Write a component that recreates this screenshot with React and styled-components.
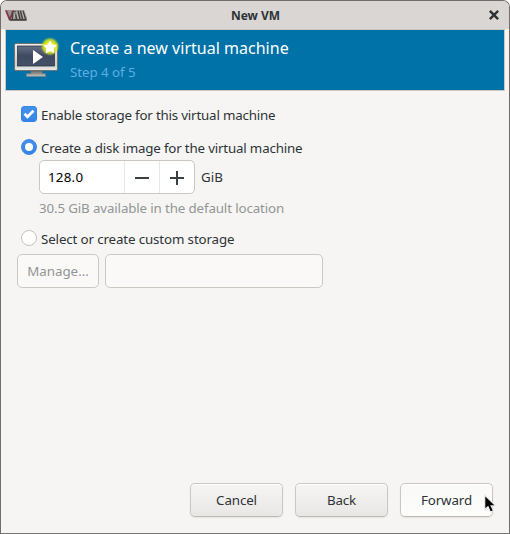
import React from "react";
import styled, { createGlobalStyle, css } from "styled-components";

const GlobalStyle = createGlobalStyle`
  * { box-sizing: border-box; }
  html, body { margin: 0; padding: 0; background: #fff; overflow: hidden; }
  body { font: 13.33px/18px "Noto Sans", sans-serif; color: #2e3436; }
`;

const Window = styled.main`
  position: relative;
  display: flex;
  flex-direction: column;
  width: 510px;
  height: 534px;
  border: 1px solid #716d6a;
  border-bottom-color: #777;
  border-radius: 7px 7px 0 0;
  background: #f6f5f4;
  overflow: hidden;
`;

const TitleBar = styled.header`
  display: grid;
  grid-template-columns: 24px 1fr 24px;
  align-items: center;
  flex: none;
  height: 28px;
  padding: 0 3px 0 4px;
  background: #dad6d3;
`;

const WindowTitle = styled.h1`
  margin: 0;
  padding-top: 1px;
  font-size: 12px;
  line-height: 18px;
  font-weight: 700;
  text-align: center;
`;

const CloseButton = styled.button`
  display: flex;
  justify-content: center;
  padding: 0;
  border: 0;
  background: none;
`;

const Banner = styled.section`
  display: flex;
  flex: none;
  height: 62px;
  margin: 0 4px;
  padding: 5px 8px;
  gap: 8px;
  border: 1px solid #cdc7c2;
  background: #0072a8;
`;

const BannerText = styled.div`
  padding-top: 2px;
`;

const BannerTitle = styled.h2`
  margin: 0;
  font-size: 16px;
  line-height: 22px;
  font-weight: 400;
  letter-spacing: 0.02px;
  color: #fff;
`;

const Step = styled.p`
  margin: 4px 0 0;
  line-height: 18px;
  letter-spacing: -0.06px;
  color: #5caee0;
`;

const Content = styled.section`
  display: flex;
  flex-direction: column;
  flex: 1;
  padding: 14px 16px 0;
`;

const Choice = styled.label`
  display: flex;
  align-items: center;
  gap: 4px;
  height: 18px;
  margin: 0 0 ${(p) => p.$after}px 4px;
`;

const ChoiceText = styled.span`
  padding-top: 2px;
  letter-spacing: ${(p) => p.$tracking}px;
`;

const Mark = styled.span`
  display: flex;
  flex: none;
  align-items: center;
  justify-content: center;
  width: 16px;
  height: 16px;
  border-radius: ${(p) => (p.$round ? "50%" : "3px")};
  border: 1px solid #c8c1bb;
  background: #fff;
  ${(p) =>
    p.$checked &&
    css`
      border-color: #3683e5;
      background: linear-gradient(#4590ec, #3584e4);
    `}
`;

const RadioDot = styled.span`
  width: 8px;
  height: 8px;
  border-radius: 50%;
  background: #fff;
`;

const SizeRow = styled.div`
  display: flex;
  align-items: center;
  gap: 6px;
  margin-left: 22px;
`;

const SpinBox = styled.div`
  display: grid;
  grid-template-columns: 84px 35px 35px;
  width: 156px;
  height: 34px;
  border: 1px solid #cdc7c2;
  border-radius: 5px;
  background: #fff;
  overflow: hidden;
`;

const SpinValue = styled.span`
  padding-left: 8px;
  line-height: 33px;
  letter-spacing: 0.25px;
  color: #000;
`;

const SpinButton = styled.button`
  display: flex;
  align-items: center;
  justify-content: center;
  padding: 0;
  border: 0;
  border-left: 1px solid #eae8e6;
  background: none;
`;

const Hint = styled.p`
  margin: 5px 0 12px 22px;
  letter-spacing: -0.135px;
  color: #929595;
`;

const StorageRow = styled.div`
  display: flex;
  gap: 6px;
`;

const Button = styled.button`
  width: 93px;
  height: 34px;
  padding: 0;
  border: 1px solid #cdc7c2;
  border-bottom-color: #bfb8b1;
  border-radius: 5px;
  background: ${(p) => (p.$hover ? "linear-gradient(#f9f9f8, #fdfdfc)" : "linear-gradient(#f6f5f4, #e9e7e5)")};
  box-shadow: inset 0 1px #fff, 0 1px 2px rgba(0, 0, 0, 0.07);
  font: inherit;
  letter-spacing: -0.12px;
  color: #2e3436;
`;

const DisabledButton = styled(Button)`
  width: 82px;
  border-color: #cdc7c2;
  background: #faf9f8;
  box-shadow: none;
  letter-spacing: 0;
  color: #929595;
`;

const DisabledInput = styled.input`
  width: 218px;
  height: 34px;
  border: 1px solid #cdc7c2;
  border-radius: 5px;
  background: #faf9f8;
`;

const Footer = styled.footer`
  display: flex;
  justify-content: flex-end;
  gap: 12px;
  padding: 0 16px 16px;
`;

const Cursor = styled.svg`
  position: absolute;
  left: 483px;
  top: 493px;
`;

function AppIcon() {
  return (
    <svg width="24" height="14" viewBox="0 0 24 14">
      <path d="M0 2h19l3 8v2.500H4z" fill="#969391" />
      <path d="M1 2.500l3.500 8.500M8.500 2.500L5 11" fill="none" stroke="#8a3346" strokeWidth="1.800" />
      <path d="M7.500 11V3.500M10 3l1.500 8M13 3l2 8M15.500 3l2 8M18 3l2.500 8" fill="none" stroke="#414141" strokeWidth="1.300" />
      <path d="M8.500 11l2-7M11.500 3.500l1.800 7M17 3.500l2 7" fill="none" stroke="#c0bdbb" strokeWidth=".8" />
      <path d="M3.500 11H21.500v1.800H5z" fill="#444" />
    </svg>
  );
}

function CloseIcon() {
  return (
    <svg width="10" height="10" viewBox="0 0 10 10">
      <path d="M1.700 1.700l6.600 6.600M8.300 1.700L1.700 8.300" stroke="#2e3436" strokeWidth="2.400" strokeLinecap="square" />
    </svg>
  );
}

function MachineIcon() {
  return (
    <svg width="48" height="48" viewBox="0 0 48 48">
      <defs>
        <linearGradient id="screen" x2="0" y2="1">
          <stop stopColor="#657087" />
          <stop offset=".5" stopColor="#3f4a5f" />
          <stop offset="1" stopColor="#445168" />
        </linearGradient>
        <linearGradient id="frame" x2="0" y2="1">
          <stop stopColor="#eeeeec" />
          <stop offset=".8" stopColor="#cfcfcb" />
          <stop offset="1" stopColor="#eeeeec" />
        </linearGradient>
        <linearGradient id="stand" x2="0" y2="1">
          <stop stopColor="#555" />
          <stop offset="1" stopColor="#c5c5c1" />
        </linearGradient>
        <radialGradient id="glow">
          <stop offset=".35" stopColor="#f2f51a" />
          <stop offset=".7" stopColor="#d9e51c" stopOpacity=".85" />
          <stop offset="1" stopColor="#c2df26" stopOpacity="0" />
        </radialGradient>
      </defs>
      <path d="M17 35h11v3.500h3.500v3H12.500v-3H17z" fill="url(#stand)" stroke="#777" strokeWidth=".5" />
      <rect x=".5" y="8.500" width="43" height="27" rx="1.500" fill="url(#frame)" stroke="#70736f" />
      <rect x="3.500" y="11" width="37" height="20" fill="url(#screen)" stroke="#222b3b" strokeWidth=".7" />
      <path d="M19 15l10 7-10 7z" fill="#fff" />
      <circle cx="36" cy="11.500" r="9.500" fill="url(#glow)" />
      <path d="M36 6l1.900 4 4.200.5-3 2.900.7 4.300-3.800-2.100-3.800 2.100.7-4.300-3-2.900 4.200-.5z" fill="#fff" stroke="#fff" strokeLinejoin="round" />
    </svg>
  );
}

export default function App() {
  return (
    <>
      <GlobalStyle />
      <Window>
        <TitleBar>
          <AppIcon />
          <WindowTitle>New VM</WindowTitle>
          <CloseButton aria-label="Close"><CloseIcon /></CloseButton>
        </TitleBar>
        <Banner>
          <MachineIcon />
          <BannerText>
            <BannerTitle>Create a new virtual machine</BannerTitle>
            <Step>Step 4 of 5</Step>
          </BannerText>
        </Banner>
        <Content>
          <Choice $after={15}>
            <Mark $checked>
              <svg width="14" height="14" viewBox="0 0 14 14">
                <path d="M2.500 6.700l3 3 6-6" fill="none" stroke="#fff" strokeWidth="2.800" />
              </svg>
            </Mark>
            <ChoiceText $tracking={-0.19}>Enable storage for this virtual machine</ChoiceText>
          </Choice>
          <Choice $after={4}>
            <Mark $checked $round><RadioDot /></Mark>
            <ChoiceText $tracking={-0.18}>Create a disk image for the virtual machine</ChoiceText>
          </Choice>
          <SizeRow>
            <SpinBox>
              <SpinValue>128.0</SpinValue>
              <SpinButton aria-label="Decrease">
                <svg width="14" height="14"><path d="M0 6h14v2H0z" fill="#3a4042" /></svg>
              </SpinButton>
              <SpinButton aria-label="Increase">
                <svg width="14" height="14"><path d="M0 6h6V0h2v6h6v2H8v6H6V8H0z" fill="#3a4042" /></svg>
              </SpinButton>
            </SpinBox>
            <span>GiB</span>
          </SizeRow>
          <Hint>30.5 GiB available in the default location</Hint>
          <Choice $after={7}>
            <Mark $round />
            <ChoiceText $tracking={-0.13}>Select or create custom storage</ChoiceText>
          </Choice>
          <StorageRow>
            <DisabledButton disabled>Manage...</DisabledButton>
            <DisabledInput disabled aria-label="Storage path" />
          </StorageRow>
        </Content>
        <Footer>
          <Button>Cancel</Button>
          <Button>Back</Button>
          <Button $hover>Forward</Button>
        </Footer>
        <Cursor width="14" height="20" viewBox="0 0 14 20">
          <path d="M.7 1v14.500l3.300-2.700 2.300 5.200 3.200-1.300-2.300-4.800h4.600z" fill="#000" stroke="#eee" strokeWidth="1.200" />
        </Cursor>
      </Window>
    </>
  );
}
